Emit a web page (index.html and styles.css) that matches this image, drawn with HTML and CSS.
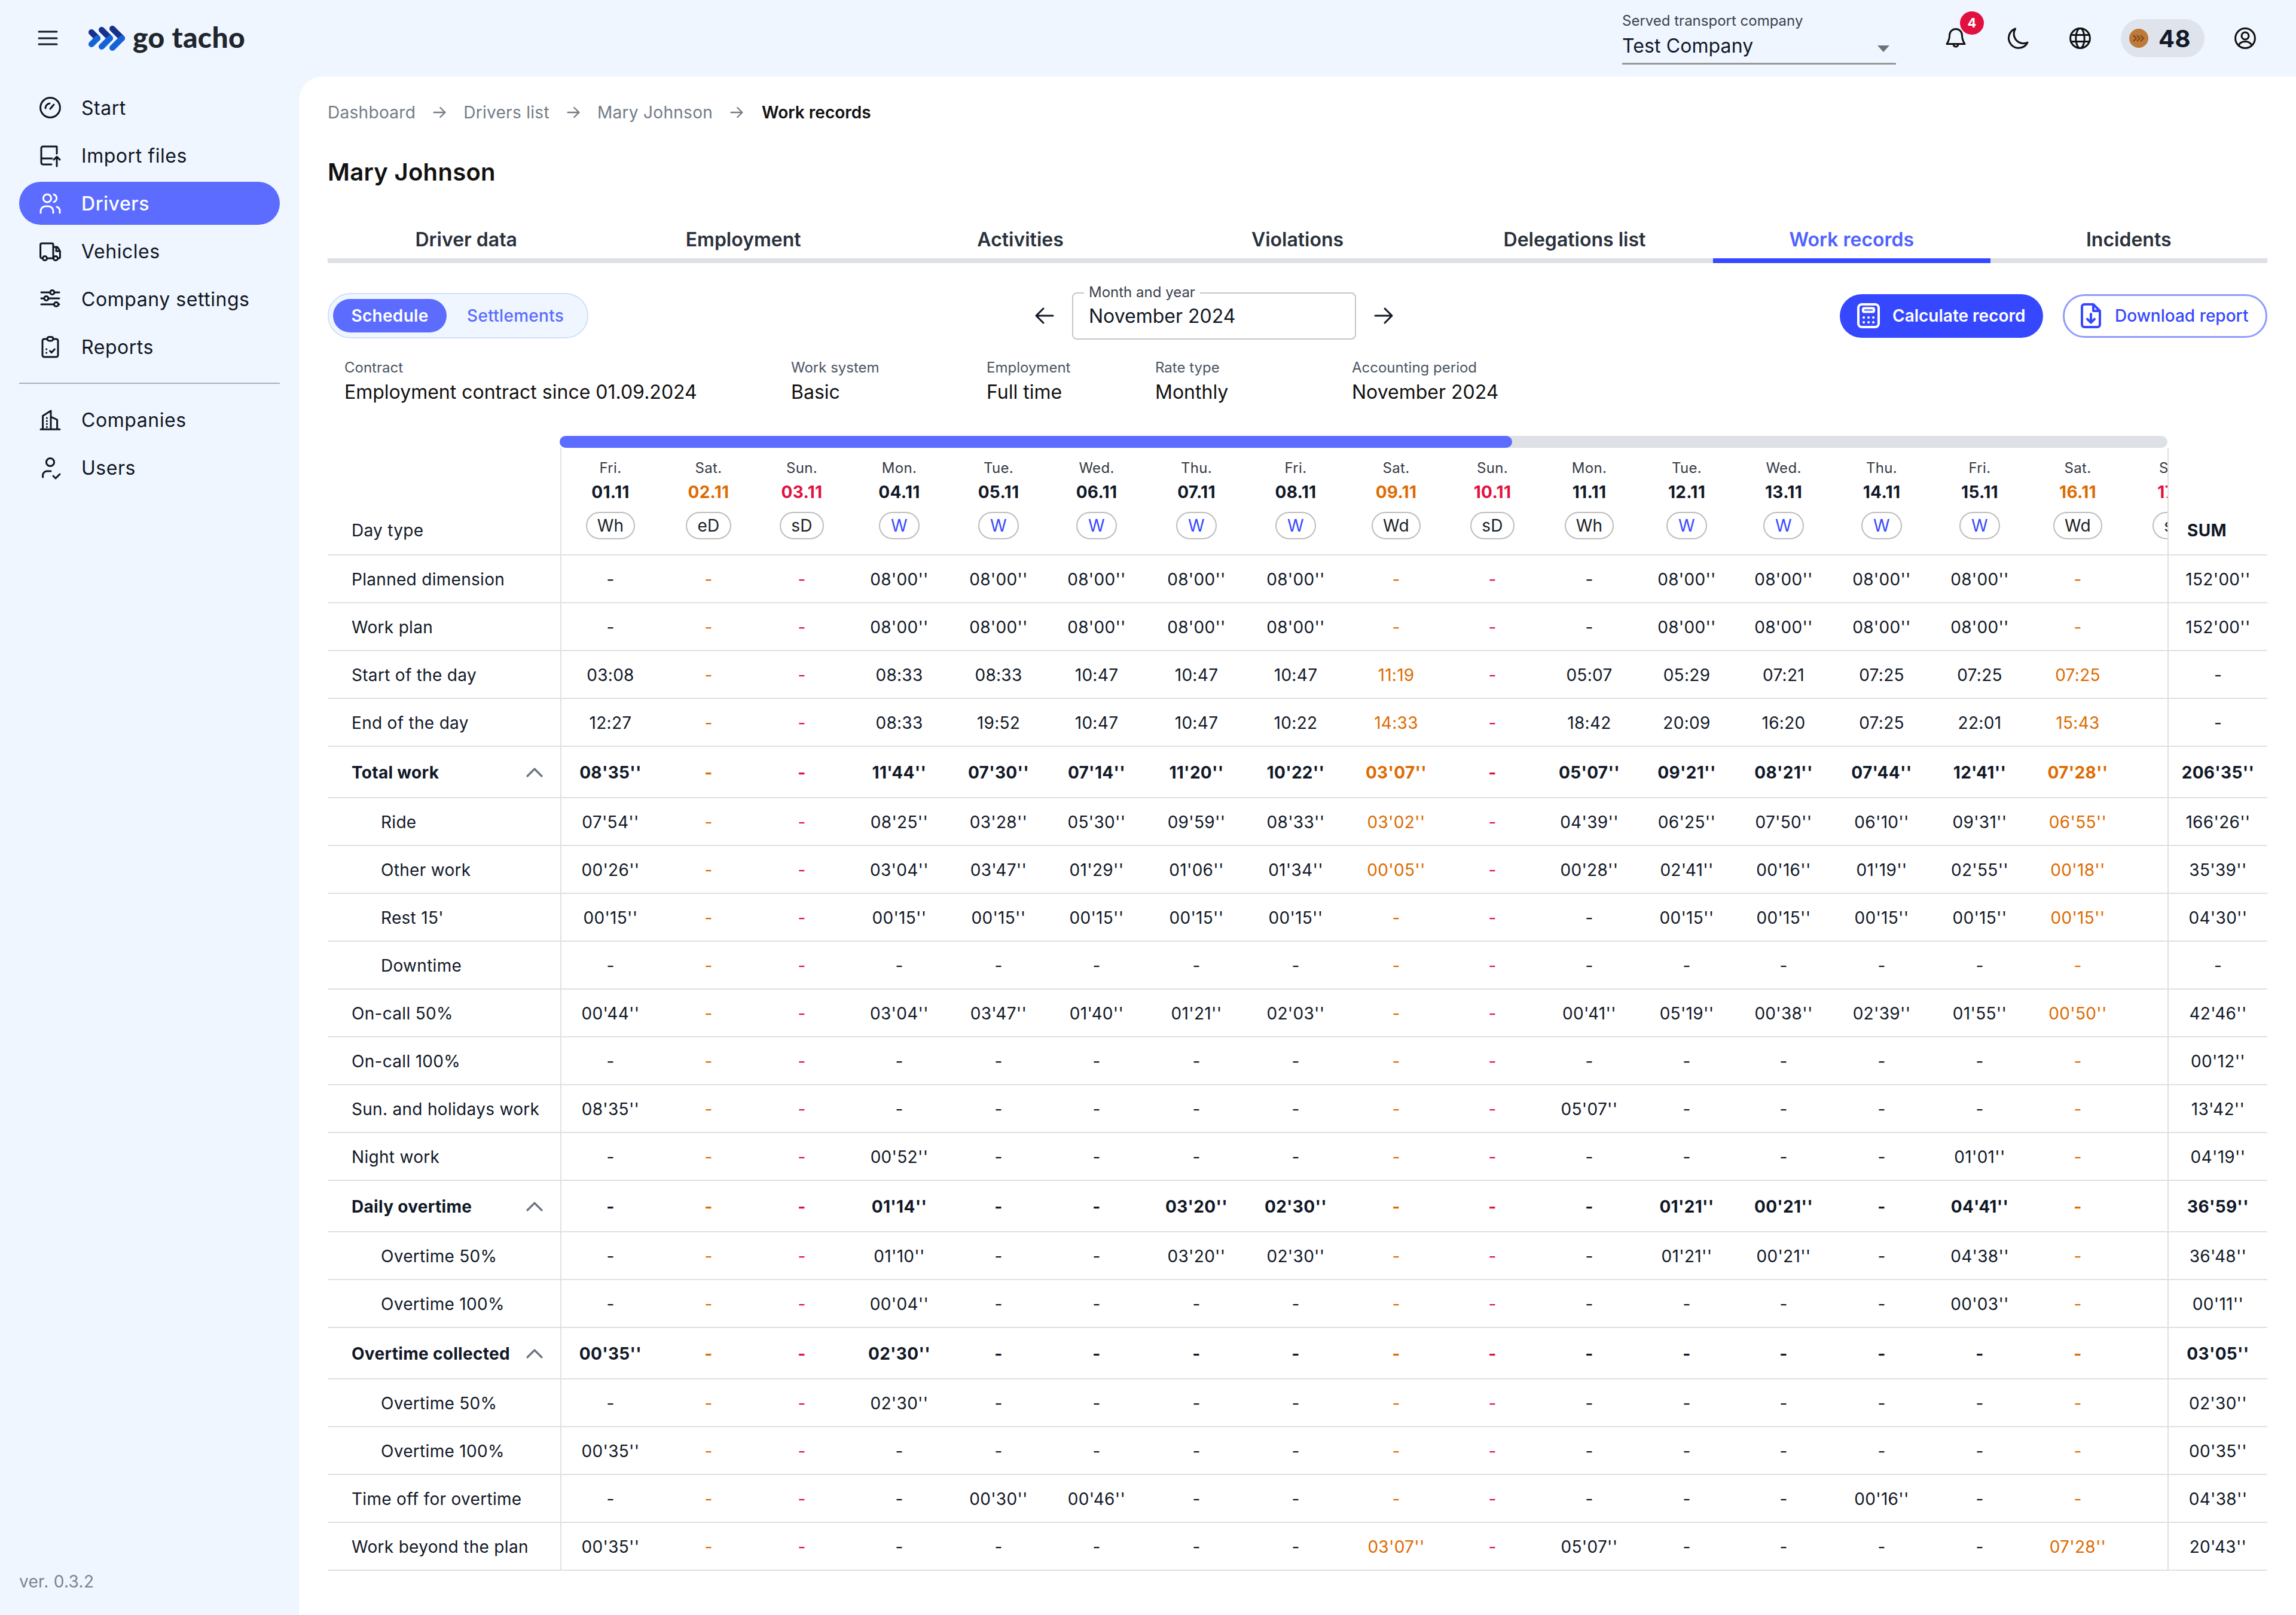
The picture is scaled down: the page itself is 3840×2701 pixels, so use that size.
FILE: index.html
```html
<!DOCTYPE html>
<html lang="en">
<head>
<meta charset="utf-8">
<title>go tacho – Work records</title>
<link rel="stylesheet" href="styles.css">
</head>
<body>
<div class="app">
<header class="topbar">
  <svg class="ic burger" viewBox="0 0 24 24"><path d="M4.500 6.500h15M4.500 12h15M4.500 17h15"/></svg>
  <div class="logo">
    <svg class="logo-mark" viewBox="0 0 64 44">
      <g class="arm-top"><path d="M7 12l10 10M24 8l14 14M42 6l16 16"/></g>
      <g class="arm-bot"><path d="M17 22L7 32M38 22L24 36M58 22L42 38"/></g>
    </svg>
    <span class="logo-text">go tacho</span>
  </div>
  <div class="topbar-right">
    <div class="select">
      <span class="select-label">Served transport company</span>
      <div class="select-row"><span>Test Company</span><i class="caret"></i></div>
    </div>
    <div class="tools">
      <div class="tool">
        <svg class="ic" viewBox="0 0 24 24"><path d="M12 4.200a5.200 5.200 0 0 0-5.200 5.200c0 4-1.500 6-2.300 7.400h15c-.8-1.400-2.300-3.400-2.300-7.400A5.200 5.200 0 0 0 12 4.200zM10 17a2 2 0 0 0 4 0"/></svg>
        <span class="badge">4</span>
      </div>
      <div class="tool"><svg class="ic" viewBox="0 0 24 24"><path d="M20 15.500A8 8 0 0 1 9.800 4a8.300 8.300 0 1 0 10.200 11.500z"/></svg></div>
      <div class="tool"><svg class="ic" viewBox="0 0 24 24"><circle cx="12" cy="12" r="8.200"/><ellipse cx="12" cy="12" rx="3.600" ry="8.200"/><path d="M4.300 9.200h15.400M4.300 14.800h15.400"/></svg></div>
      <div class="coins">
        <svg class="coin" viewBox="0 0 32 32"><circle cx="16" cy="16" r="16"/><path d="M7 11l5 5-5 5M13 11l5 5-5 5M19 11l5 5-5 5"/></svg>
        <span>48</span>
      </div>
      <div class="tool"><svg class="ic" viewBox="0 0 24 24"><circle cx="12" cy="12" r="8.200"/><circle cx="12" cy="10" r="3"/><path d="M6.500 18c.8-2.200 2.700-3.300 5.500-3.300s4.700 1.100 5.500 3.300"/></svg></div>
    </div>
  </div>
</header>

<aside class="sidebar">
  <nav class="nav">
    <a class="nav-item"><svg class="ic" viewBox="0 0 24 24"><circle cx="12" cy="12" r="8.200"/><path d="M8 12.500a4 4 0 0 1 3.500-4M12 13l3-3.500"/></svg>Start</a>
    <a class="nav-item"><svg class="ic" viewBox="0 0 24 24"><path d="M17.500 10.500V4.500H6A1.500 1.500 0 0 0 4.500 6v12A1.500 1.500 0 0 0 6 19.500h7M4.500 14.500h9M17.500 21v-8M15 15.500l2.500-2.500 2.500 2.500"/></svg>Import files</a>
    <a class="nav-item active"><svg class="ic" viewBox="0 0 24 24"><circle cx="9.500" cy="7.800" r="3.300"/><path d="M15 4.600a3.300 3.300 0 0 1 0 6.300M4 20v-1.500a4 4 0 0 1 4-4h2.500a4 4 0 0 1 4 4V20M17.500 15a3.500 3.500 0 0 1 2.500 3.500V20"/></svg>Drivers</a>
    <a class="nav-item"><svg class="ic" viewBox="0 0 24 24"><path d="M5.500 18H5a1.200 1.200 0 0 1-1.200-1.200V6.700A1.200 1.200 0 0 1 5 5.500h8.500a1 1 0 0 1 1 1V18M9.500 18h5M14.500 8.500h3a1 1 0 0 1 .9.500l1.800 3v5a1 1 0 0 1-1 1h-.7M17 8.700V12h3"/><circle cx="7.500" cy="18" r="1.800"/><circle cx="16.500" cy="18" r="1.800"/></svg>Vehicles</a>
    <a class="nav-item"><svg class="ic" viewBox="0 0 24 24"><path d="M4.500 6.500h7.300M15.500 6.500h4M4.500 11.500h2.300M10.500 11.500h9M4.500 16.500h10.600M18.800 16.500h.7"/><circle cx="13.700" cy="6.500" r="1.800"/><circle cx="8.700" cy="11.500" r="1.800"/><circle cx="17" cy="16.500" r="1.800"/></svg>Company settings</a>
    <a class="nav-item"><svg class="ic" viewBox="0 0 24 24"><path d="M9.500 5.500H7A1.500 1.500 0 0 0 5.500 7v12A1.500 1.500 0 0 0 7 20.500h10a1.500 1.500 0 0 0 1.500-1.500V7A1.500 1.500 0 0 0 17 5.500h-2.500"/><rect x="9.500" y="3.700" width="5" height="3.300" rx="1.600"/><path d="M11.800 15.500l1.300 1.300 2.600-2.800M8.800 14h.1M8.800 17h.1"/></svg>Reports</a>
    <hr class="nav-divider">
    <a class="nav-item"><svg class="ic" viewBox="0 0 24 24"><path d="M4 20h16M5.800 20V8.800L12.500 4.500V20M12.500 9.500l5.300 2.500V20M9.200 10.500v.1M9.200 13v.1M9.200 15.500v.1M9.200 18v.1"/></svg>Companies</a>
    <a class="nav-item"><svg class="ic" viewBox="0 0 24 24"><circle cx="12" cy="7.500" r="3.300"/><path d="M5.800 20v-1.500a3.500 3.500 0 0 1 3.500-3.500h3.200M14.500 19l2 2 3.500-3.500"/></svg>Users</a>
  </nav>
  <div class="version">ver. 0.3.2</div>
</aside>

<main class="main">
  <div class="crumbs">
    <span>Dashboard</span><svg class="crumb-arrow" viewBox="0 0 24 24"><path d="M5 12h14M13 6l6 6-6 6"/></svg>
    <span>Drivers list</span><svg class="crumb-arrow" viewBox="0 0 24 24"><path d="M5 12h14M13 6l6 6-6 6"/></svg>
    <span>Mary Johnson</span><svg class="crumb-arrow" viewBox="0 0 24 24"><path d="M5 12h14M13 6l6 6-6 6"/></svg>
    <span class="crumb-current">Work records</span>
  </div>
  <h1 class="title">Mary Johnson</h1>
  <div class="tabs">
    <a class="tab">Driver data</a><a class="tab">Employment</a><a class="tab">Activities</a><a class="tab">Violations</a><a class="tab">Delegations list</a><a class="tab active">Work records</a><a class="tab">Incidents</a>
  </div>

  <div class="toolbar">
    <div class="toggle"><span class="toggle-on">Schedule</span><span class="toggle-off">Settlements</span></div>
    <div class="month">
      <svg class="ic" viewBox="0 0 24 24"><path d="M19 12H5M11 6l-6 6 6 6"/></svg>
      <div class="month-field"><span class="month-label">Month and year</span>November 2024</div>
      <svg class="ic" viewBox="0 0 24 24"><path d="M5 12h14M13 6l6 6-6 6"/></svg>
    </div>
    <div class="actions">
      <a class="btn btn-solid"><svg class="ic" viewBox="0 0 24 24"><rect x="3.500" y="2.500" width="17" height="19" rx="3"/><rect x="7.500" y="5.700" width="9" height="3" rx=".8"/><path d="M8 13.500h.1M12 13.500h.1M16 13.500h.1M8 17.500h.1M12 17.500h.1M16 17.500h.1"/></svg>Calculate record</a>
      <a class="btn btn-line"><svg class="ic" viewBox="0 0 24 24"><path d="M14 2.500H6.500a2 2 0 0 0-2 2v15a2 2 0 0 0 2 2h11a2 2 0 0 0 2-2V8zM14 2.500V8h5.500M12 10.500v7M9 14.800l3 3 3-3"/></svg>Download report</a>
    </div>
  </div>

  <dl class="info">
    <div><dt>Contract</dt><dd>Employment contract since 01.09.2024</dd></div>
    <div><dt>Work system</dt><dd>Basic</dd></div>
    <div><dt>Employment</dt><dd>Full time</dd></div>
    <div><dt>Rate type</dt><dd>Monthly</dd></div>
    <div><dt>Accounting period</dt><dd>November 2024</dd></div>
  </dl>

  <section class="sched">
    <div class="bar"><div class="bar-thumb"></div></div>

    <table class="labels">
      <tr class="head"><th>Day type
      <tr><td>Planned dimension
      <tr><td>Work plan
      <tr><td>Start of the day
      <tr><td>End of the day
      <tr class="b"><td><span class="group">Total work<svg class="chev" viewBox="0 0 24 24"><path d="M6 15l6-6 6 6"/></svg></span>
      <tr class="sub"><td>Ride
      <tr class="sub"><td>Other work
      <tr class="sub"><td>Rest 15'
      <tr class="sub"><td>Downtime
      <tr><td>On-call 50%
      <tr><td>On-call 100%
      <tr><td>Sun. and holidays work
      <tr><td>Night work
      <tr class="b"><td><span class="group">Daily overtime<svg class="chev" viewBox="0 0 24 24"><path d="M6 15l6-6 6 6"/></svg></span>
      <tr class="sub"><td>Overtime 50%
      <tr class="sub"><td>Overtime 100%
      <tr class="b"><td><span class="group">Overtime collected<svg class="chev" viewBox="0 0 24 24"><path d="M6 15l6-6 6 6"/></svg></span>
      <tr class="sub"><td>Overtime 50%
      <tr class="sub"><td>Overtime 100%
      <tr><td>Time off for overtime
      <tr><td>Work beyond the plan
    </table>

    <div class="days-wrap">
    <table class="days">
      <colgroup><col class="w164"><col class="w164"><col class="w148"><col class="w178"><col class="w154"><col class="w174"><col class="w160"><col class="w172"><col class="w164"><col class="w158"><col class="w166"><col class="w160"><col class="w164"><col class="w164"><col class="w164"><col class="w164"><col class="w160"></colgroup>
      <tr class="head">
        <th><small>Fri.</small><b>01.11</b><i>Wh</i>
        <th><small>Sat.</small><b>02.11</b><i>eD</i>
        <th><small>Sun.</small><b>03.11</b><i>sD</i>
        <th><small>Mon.</small><b>04.11</b><i class="w">W</i>
        <th><small>Tue.</small><b>05.11</b><i class="w">W</i>
        <th><small>Wed.</small><b>06.11</b><i class="w">W</i>
        <th><small>Thu.</small><b>07.11</b><i class="w">W</i>
        <th><small>Fri.</small><b>08.11</b><i class="w">W</i>
        <th><small>Sat.</small><b>09.11</b><i>Wd</i>
        <th><small>Sun.</small><b>10.11</b><i>sD</i>
        <th><small>Mon.</small><b>11.11</b><i>Wh</i>
        <th><small>Tue.</small><b>12.11</b><i class="w">W</i>
        <th><small>Wed.</small><b>13.11</b><i class="w">W</i>
        <th><small>Thu.</small><b>14.11</b><i class="w">W</i>
        <th><small>Fri.</small><b>15.11</b><i class="w">W</i>
        <th><small>Sat.</small><b>16.11</b><i>Wd</i>
        <th><small>Sun.</small><b>17.11</b><i>sD</i>
      <tr><td>-<td>-<td>-<td>08'00''<td>08'00''<td>08'00''<td>08'00''<td>08'00''<td>-<td>-<td>-<td>08'00''<td>08'00''<td>08'00''<td>08'00''<td>-<td>-
      <tr><td>-<td>-<td>-<td>08'00''<td>08'00''<td>08'00''<td>08'00''<td>08'00''<td>-<td>-<td>-<td>08'00''<td>08'00''<td>08'00''<td>08'00''<td>-<td>-
      <tr><td>03:08<td>-<td>-<td>08:33<td>08:33<td>10:47<td>10:47<td>10:47<td>11:19<td>-<td>05:07<td>05:29<td>07:21<td>07:25<td>07:25<td>07:25<td>-
      <tr><td>12:27<td>-<td>-<td>08:33<td>19:52<td>10:47<td>10:47<td>10:22<td>14:33<td>-<td>18:42<td>20:09<td>16:20<td>07:25<td>22:01<td>15:43<td>-
      <tr class="b"><td>08'35''<td>-<td>-<td>11'44''<td>07'30''<td>07'14''<td>11'20''<td>10'22''<td>03'07''<td>-<td>05'07''<td>09'21''<td>08'21''<td>07'44''<td>12'41''<td>07'28''<td>-
      <tr><td>07'54''<td>-<td>-<td>08'25''<td>03'28''<td>05'30''<td>09'59''<td>08'33''<td>03'02''<td>-<td>04'39''<td>06'25''<td>07'50''<td>06'10''<td>09'31''<td>06'55''<td>-
      <tr><td>00'26''<td>-<td>-<td>03'04''<td>03'47''<td>01'29''<td>01'06''<td>01'34''<td>00'05''<td>-<td>00'28''<td>02'41''<td>00'16''<td>01'19''<td>02'55''<td>00'18''<td>-
      <tr><td>00'15''<td>-<td>-<td>00'15''<td>00'15''<td>00'15''<td>00'15''<td>00'15''<td>-<td>-<td>-<td>00'15''<td>00'15''<td>00'15''<td>00'15''<td>00'15''<td>-
      <tr><td>-<td>-<td>-<td>-<td>-<td>-<td>-<td>-<td>-<td>-<td>-<td>-<td>-<td>-<td>-<td>-<td>-
      <tr><td>00'44''<td>-<td>-<td>03'04''<td>03'47''<td>01'40''<td>01'21''<td>02'03''<td>-<td>-<td>00'41''<td>05'19''<td>00'38''<td>02'39''<td>01'55''<td>00'50''<td>-
      <tr><td>-<td>-<td>-<td>-<td>-<td>-<td>-<td>-<td>-<td>-<td>-<td>-<td>-<td>-<td>-<td>-<td>-
      <tr><td>08'35''<td>-<td>-<td>-<td>-<td>-<td>-<td>-<td>-<td>-<td>05'07''<td>-<td>-<td>-<td>-<td>-<td>-
      <tr><td>-<td>-<td>-<td>00'52''<td>-<td>-<td>-<td>-<td>-<td>-<td>-<td>-<td>-<td>-<td>01'01''<td>-<td>-
      <tr class="b"><td>-<td>-<td>-<td>01'14''<td>-<td>-<td>03'20''<td>02'30''<td>-<td>-<td>-<td>01'21''<td>00'21''<td>-<td>04'41''<td>-<td>-
      <tr><td>-<td>-<td>-<td>01'10''<td>-<td>-<td>03'20''<td>02'30''<td>-<td>-<td>-<td>01'21''<td>00'21''<td>-<td>04'38''<td>-<td>-
      <tr><td>-<td>-<td>-<td>00'04''<td>-<td>-<td>-<td>-<td>-<td>-<td>-<td>-<td>-<td>-<td>00'03''<td>-<td>-
      <tr class="b"><td>00'35''<td>-<td>-<td>02'30''<td>-<td>-<td>-<td>-<td>-<td>-<td>-<td>-<td>-<td>-<td>-<td>-<td>-
      <tr><td>-<td>-<td>-<td>02'30''<td>-<td>-<td>-<td>-<td>-<td>-<td>-<td>-<td>-<td>-<td>-<td>-<td>-
      <tr><td>00'35''<td>-<td>-<td>-<td>-<td>-<td>-<td>-<td>-<td>-<td>-<td>-<td>-<td>-<td>-<td>-<td>-
      <tr><td>-<td>-<td>-<td>-<td>00'30''<td>00'46''<td>-<td>-<td>-<td>-<td>-<td>-<td>-<td>00'16''<td>-<td>-<td>-
      <tr><td>00'35''<td>-<td>-<td>-<td>-<td>-<td>-<td>-<td>03'07''<td>-<td>05'07''<td>-<td>-<td>-<td>-<td>07'28''<td>-
    </table>
    </div>

    <table class="sum">
      <tr class="head"><th>SUM
      <tr><td>152'00''
      <tr><td>152'00''
      <tr><td>-
      <tr><td>-
      <tr class="b"><td>206'35''
      <tr><td>166'26''
      <tr><td>35'39''
      <tr><td>04'30''
      <tr><td>-
      <tr><td>42'46''
      <tr><td>00'12''
      <tr><td>13'42''
      <tr><td>04'19''
      <tr class="b"><td>36'59''
      <tr><td>36'48''
      <tr><td>00'11''
      <tr class="b"><td>03'05''
      <tr><td>02'30''
      <tr><td>00'35''
      <tr><td>04'38''
      <tr><td>20'43''
    </table>
  </section>
</main>
</div>
</body>
</html>
```
FILE: styles.css
```css
* { box-sizing: border-box; }
html, body { margin: 0; padding: 0; }
body {
  font-family: "Inter", "Noto Sans", sans-serif;
  color: #111827;
  background: #f0f6ff;
  font-size: 32px;
}
.app {
  display: grid;
  grid-template-columns: 500px 1fr;
  grid-template-rows: 128px 1fr;
  min-height: 2701px;
  width: 3840px;
}
.ic {
  width: 48px; height: 48px; flex: none;
  fill: none; stroke: currentColor; stroke-width: 1.5;
  stroke-linecap: round; stroke-linejoin: round;
}

/* top bar */
.topbar {
  grid-column: 1 / -1;
  display: flex; align-items: center;
  padding: 0 57px 0 56px;
}
.logo { display: flex; align-items: center; gap: 12px; margin-left: 42px; }
.logo-mark { width: 64px; height: 44px; fill: none; stroke-width: 10; stroke-linecap: round; }
.arm-top { stroke: #17308c; }
.arm-bot { stroke: #1463d6; }
.logo-text { font-family: "Lato", sans-serif; font-weight: 900; font-size: 48px; letter-spacing: .4px; color: #20262e; line-height: 1; margin-top: -4px; }
.topbar-right { margin-left: auto; align-self: stretch; display: flex; align-items: center; gap: 72px; }
.select { width: 458px; height: 108px; padding-top: 19px; border-bottom: 3px solid #999; align-self: flex-start; }
.select-label { display: block; font-size: 24px; line-height: 32px; color: #39424e; }
.select-row { display: flex; justify-content: space-between; align-items: center; font-size: 32px; line-height: 44px; margin-top: 4px; letter-spacing: .1px; padding-right: 11px; }
.caret { width: 0; height: 0; border: 10px solid transparent; border-top: 11px solid #6f7276; border-bottom: 0; margin-top: 8px; }
.tools { display: flex; align-items: center; gap: 48px; }
.tool { position: relative; width: 56px; height: 56px; display: flex; align-items: center; justify-content: center; color: #111; }
.badge {
  position: absolute; left: 35px; top: -17px;
  width: 40px; height: 39px; border-radius: 50%;
  background: #e2103f; color: #fff;
  font-size: 22px; font-weight: 700; line-height: 39px; text-align: center;
}
.coins {
  display: flex; align-items: center; gap: 17px;
  width: 140px; height: 64px; margin: 0 -8px; padding-left: 14px;
  border-radius: 32px; background: #dfe4ec;
  font-size: 40px; font-weight: 700; letter-spacing: .5px;
}
.coin { width: 32px; height: 32px; fill: #bd7a38; flex: none; }
.coin path { fill: none; stroke: #7c4618; stroke-width: 2; }

/* sidebar */
.sidebar { display: flex; flex-direction: column; padding: 16px 0 36px; }
.nav { display: flex; flex-direction: column; gap: 8px; padding: 0 32px; }
.nav-item {
  display: flex; align-items: center; gap: 28px;
  height: 72px; padding-left: 28px; border-radius: 36px;
  font-size: 32px; letter-spacing: .55px; color: #10161f;
}
.nav-item.active { background: #5b6cff; color: #fff; font-weight: 500; }
.nav-divider { border: 0; border-top: 2px solid #aab0b6; margin: 16px 0; width: 100%; }
.version { margin-top: auto; padding-left: 32px; font-size: 28px; line-height: 40px; color: #7b8590; letter-spacing: .3px; }

/* main */
.main { background: #fff; border-top-left-radius: 40px; padding: 40px 48px 0; min-width: 0; }
.crumbs { display: flex; align-items: center; gap: 24px; height: 40px; font-size: 28px; color: #737c87; letter-spacing: .3px; }
.crumb-arrow { width: 32px; height: 32px; fill: none; stroke: #737c87; stroke-width: 1.8; stroke-linecap: round; stroke-linejoin: round; }
.crumb-current { color: #111; font-weight: 600; letter-spacing: 0; margin-left: 2px; }
.title { margin: 52px 0 0; font-size: 40px; line-height: 56px; font-weight: 600; color: #111; letter-spacing: .3px; }
.tabs { display: flex; margin-top: 44px; border-bottom: 8px solid #dde0e5; }
.tab {
  flex: 1; height: 80px; margin-bottom: -8px; padding-top: 8px;
  display: flex; align-items: center; justify-content: center;
  border-bottom: 8px solid transparent;
  font-size: 32px; font-weight: 600; color: #2a313c;
}
.tab.active { color: #4f61ff; border-bottom-color: #3648ff; }

.toolbar { display: flex; align-items: center; justify-content: space-between; height: 80px; margin-top: 48px; }
.toggle {
  display: flex; align-items: center; width: 436px; height: 76px; padding-left: 7px;
  background: #f0f6ff; border: 2px solid #cfe0fa; border-radius: 38px;
  font-size: 28px; letter-spacing: .3px;
}
.toggle-on { width: 190px; height: 56px; line-height: 56px; text-align: center; border-radius: 28px; background: #5b6cff; color: #fff; font-weight: 600; }
.toggle-off { margin-left: 34px; color: #5b6cff; font-weight: 500; }
.month { display: flex; align-items: center; gap: 22px; }
.month-field {
  position: relative; display: flex; align-items: center;
  width: 475px; height: 79px; padding-left: 26px;
  border: 2px solid #c6c6c6; border-radius: 8px;
  font-size: 32px;
}
.month-label { position: absolute; left: 18px; top: -17px; padding: 0 8px; background: #fff; font-size: 24px; line-height: 30px; color: #39424e; }
.actions { display: flex; align-items: center; gap: 33px; }
.btn { display: flex; align-items: center; gap: 16px; height: 73px; border-radius: 37px; font-size: 28px; }
.btn-solid { width: 340px; padding-left: 24px; background: #3648ff; color: #fff; font-weight: 600; }
.btn-line { width: 342px; padding-left: 20px; border: 3px solid #8f9bff; color: #3648ff; font-weight: 500; }
.btn .ic { stroke-width: 2; }

.info {
  display: grid; grid-template-columns: 747px 327px 282px 329px 1fr;
  margin: 31px 0 0; padding-left: 28px;
}
.info dt { font-size: 24px; line-height: 32px; color: #4b5563; }
.info dd { margin: 3px 0 0; font-size: 32px; line-height: 44px; color: #111; }

/* schedule grid */
.sched {
  display: grid;
  grid-template-columns: 391px 2686px 167px;
  grid-template-rows: 20px auto;
  margin-top: 51px;
}
.bar { grid-column: 2; grid-row: 1; margin-left: -3px; height: 20px; border-radius: 10px; background: #dde0e5; }
.bar-thumb { width: 1593px; height: 20px; border-radius: 10px; background: #5b6cff; }
.sched table { grid-row: 2; border-collapse: separate; border-spacing: 0; font-size: 28px; letter-spacing: .3px; }
.sched tr { height: 80px; }
.sched tr.b { height: 86px; font-weight: 700; }
.sched tr.head { height: 180px; }
.sched td { padding: 2px 0 0; border-bottom: 2px solid #e0e0e0; }
.sched th { padding: 0; border-bottom: 2px solid #e0e0e0; font-weight: 400; }

.labels { width: 391px; border-right: 2px solid #e0e0e0; grid-column: 1; table-layout: fixed; }
.labels td, .labels th { padding-left: 40px; text-align: left; }
.labels th { vertical-align: bottom; line-height: 40px; padding-bottom: 20px; }
.labels .sub td { padding-left: 89px; }
.group { display: flex; align-items: center; justify-content: space-between; padding-right: 19px; }
.chev { width: 48px; height: 48px; flex: none; fill: none; stroke: #6c7480; stroke-width: 1.6; stroke-linecap: round; stroke-linejoin: round; }

.days-wrap { grid-column: 2; grid-row: 2; overflow: hidden; }
.days { table-layout: fixed; width: 2778px; }
.days td, .days th { text-align: center; }
.days th { vertical-align: top; padding-top: 18px; }
.days small { display: block; font-size: 24px; line-height: 32px; color: #333a45; }
.days b { display: block; font-size: 28px; line-height: 36px; margin-top: 6px; font-weight: 700; }
.days i {
  display: inline-block; height: 46px; margin-top: 15px; padding: 0 17px;
  border: 2px solid #bdbdbd; border-radius: 23px;
  font-style: normal; font-size: 28px; line-height: 42px; letter-spacing: .3px; color: #1a1f27;
}
.days i.w { color: #3648ff; padding: 0 18px; }
.days td:nth-child(7n+2), .days th:nth-child(7n+2) b { color: #dd6b00; }
.days td:nth-child(7n+3), .days th:nth-child(7n+3) b { color: #e2103f; }

.w148 { width: 148px; } .w154 { width: 154px; } .w158 { width: 158px; } .w160 { width: 160px; }
.w164 { width: 164px; } .w166 { width: 166px; } .w172 { width: 172px; } .w174 { width: 174px; } .w178 { width: 178px; }

.sum { grid-column: 3; width: 167px; border-left: 2px solid #e0e0e0; table-layout: fixed; }
.sum td { text-align: center; }
.sum th { text-align: left; vertical-align: bottom; padding: 0 0 20px 31px; line-height: 40px; font-weight: 700 !important; }
```
